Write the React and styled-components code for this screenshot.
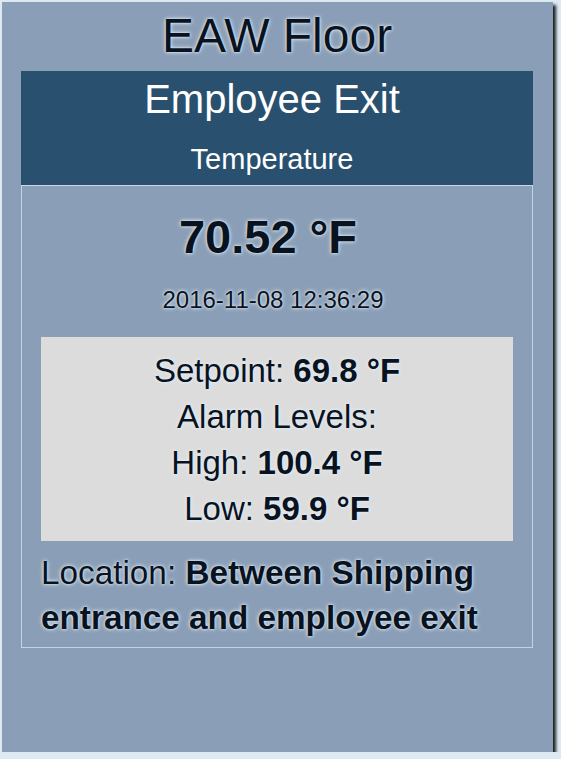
import React from "react";
import styled, { createGlobalStyle } from "styled-components";

const Global = createGlobalStyle`
  html, body { margin: 0; padding: 0; background: #dfe9f1; }
  body { font-family: "Liberation Sans", Arial, sans-serif; }
`;

const Card = styled.div`
  margin: 2px 0 0 2px;
  width: 551px;
  height: 750px;
  box-sizing: border-box;
  background: #8a9fb7;
  padding: 6px 20px 0 19px;
  box-shadow: 3px 3px 3px #1a1f26;
  color: #08131f;
`;

const Title = styled.h1`
  margin: 0 0 8px;
  font-size: 48px;
  font-weight: normal;
  text-align: center;
  line-height: normal;
  text-shadow: 0 0 4px #e6eef6, 0 0 2px #e6eef6;
`;

const Header = styled.div`
  background: #29506e;
  color: #ffffff;
  text-align: center;
  padding: 6px 10px 9px 0;
  display: flex;
  flex-direction: column;
  gap: 21px;
`;

const Name = styled.div`
  font-size: 40px;
  line-height: normal;
`;

const Kind = styled.div`
  font-size: 29px;
  line-height: normal;
`;

const Body = styled.div`
  border: 1px solid #c3d3e4;
  border-top-color: #c8d6e6;
  padding: 23px 19px 7px;
  display: flex;
  flex-direction: column;
  text-shadow: 0 0 4px #e6eef6, 0 0 2px #e6eef6;
`;

const Value = styled.div`
  font-size: 47px;
  font-weight: bold;
  text-align: center;
  line-height: normal;
  padding-right: 18px;
`;

const Stamp = styled.div`
  margin-top: 22px;
  font-size: 24px;
  text-align: center;
  line-height: normal;
  padding-right: 8px;
`;

const Levels = styled.div`
  margin-top: 23px;
  background: #dcdcdc;
  padding: 11px 0 9px;
  text-align: center;
  font-size: 33px;
  line-height: 46px;
`;

const Line = styled.div``;

const Location = styled.div`
  margin-top: 9px;
  font-size: 33.3px;
  line-height: 45px;
`;

export default function App() {
  return (
    <>
      <Global />
      <Card>
        <Title>EAW Floor</Title>
        <Header>
          <Name>Employee Exit</Name>
          <Kind>Temperature</Kind>
        </Header>
        <Body>
          <Value>70.52 °F</Value>
          <Stamp>2016-11-08 12:36:29</Stamp>
          <Levels>
            <Line>Setpoint: <b>69.8 °F</b></Line>
            <Line>Alarm Levels:</Line>
            <Line>High: <b>100.4 °F</b></Line>
            <Line>Low: <b>59.9 °F</b></Line>
          </Levels>
          <Location>
            Location: <b>Between Shipping entrance and employee exit</b>
          </Location>
        </Body>
      </Card>
    </>
  );
}
